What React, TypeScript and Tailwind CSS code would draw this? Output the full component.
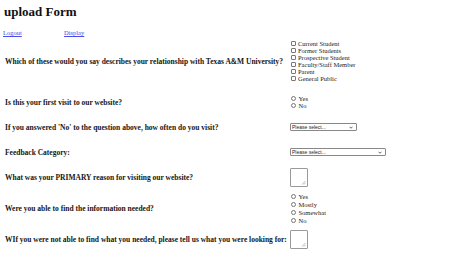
import type { ReactNode } from 'react';

function Row({ label, children, extra = '' }: { label: string; children: ReactNode; extra?: string }) {
  return (
    <div className={`flex min-h-[22px] items-center ${extra}`}>
      <div className="w-[290px] shrink-0 whitespace-nowrap pl-[5px] text-[7.5px] font-bold leading-[9px] text-[#161616]">{label}</div>
      <div className="py-[1px]">{children}</div>
    </div>
  );
}

function Check({ label }: { label: string }) {
  return (
    <label className="flex h-[7px] items-center gap-[2px] pl-[1px]">
      <input type="checkbox" className="h-[5px] w-[5px] appearance-none rounded-[1px] border-[0.6px] border-[#777] bg-white" />
      <span>{label}</span>
    </label>
  );
}

function Radio({ label, h = 'h-[7px]' }: { label: string; h?: string }) {
  return (
    <label className={`flex ${h} items-center gap-[2.5px] pl-[1px]`}>
      <input type="radio" className="h-[5px] w-[5px] appearance-none rounded-full border-[0.6px] border-[#777] bg-white" />
      <span>{label}</span>
    </label>
  );
}

function Select({ w }: { w: string }) {
  return (
    <div className={`flex h-[8px] ${w} items-center justify-between rounded-[1px] border-[0.6px] border-[#888] bg-white pl-[1px] pr-[3px] font-['Liberation_Sans',sans-serif] text-[5px] text-[#222]`}>
      <span>Please select...</span>
      <svg width="4" height="3" viewBox="0 0 8 5" fill="none" stroke="#333" strokeWidth="1.5">
        <path d="M1 1l3 3 3-3" />
      </svg>
    </div>
  );
}

function Area() {
  return (
    <div className="relative h-[19px] w-[18px] rounded-[1px] border-[0.6px] border-[#999] bg-white">
      <svg className="absolute bottom-[1px] right-[1px]" width="5" height="5" viewBox="0 0 5 5" stroke="#888" strokeWidth="0.6">
        <path d="M4.5 1L1 4.5M4.5 3L3 4.5" />
      </svg>
    </div>
  );
}

export default function App() {
  return (
    <div className="h-[259px] w-[474px] overflow-hidden bg-white font-['Liberation_Serif',serif] text-[#222]">
      <h1 className="pl-[4px] pt-[4px] text-[13px] font-bold leading-[15px] text-[#111]">upload Form</h1>
      <div className="mt-[10px] flex pl-[3px] text-[6.5px] leading-[8px] text-[#4a4ae6]">
        <a href="#" className="w-[61px] underline">Logout</a>
        <a href="#" className="underline">Display</a>
      </div>

      <div className="mt-[2px] flex flex-col gap-[3px] text-[6.5px] leading-[7px]">
        <Row label="Which of these would you say describes your relationship with Texas A&M University?" extra="mb-[5px]">
          <Check label="Current Student" />
          <Check label="Former Students" />
          <Check label="Prospective Student" />
          <Check label="Faculty/Staff Member" />
          <Check label="Parent" />
          <Check label="General Public" />
        </Row>
        <Row label="Is this your first visit to our website?">
          <Radio label="Yes" />
          <Radio label="No" />
        </Row>
        <Row label="If you answered 'No' to the question above, how often do you visit?">
          <Select w="w-[67px]" />
        </Row>
        <Row label="Feedback Category:">
          <Select w="w-[96px]" />
        </Row>
        <Row label="What was your PRIMARY reason for visiting our website?">
          <Area />
        </Row>
        <Row label="Were you able to find the information needed?">
          <Radio label="Yes" h="h-[8px]" />
          <Radio label="Mostly" h="h-[8px]" />
          <Radio label="Somewhat" h="h-[8px]" />
          <Radio label="No" h="h-[8px]" />
        </Row>
        <Row label="WIf you were not able to find what you needed, please tell us what you were looking for:">
          <Area />
        </Row>
      </div>
    </div>
  );
}
